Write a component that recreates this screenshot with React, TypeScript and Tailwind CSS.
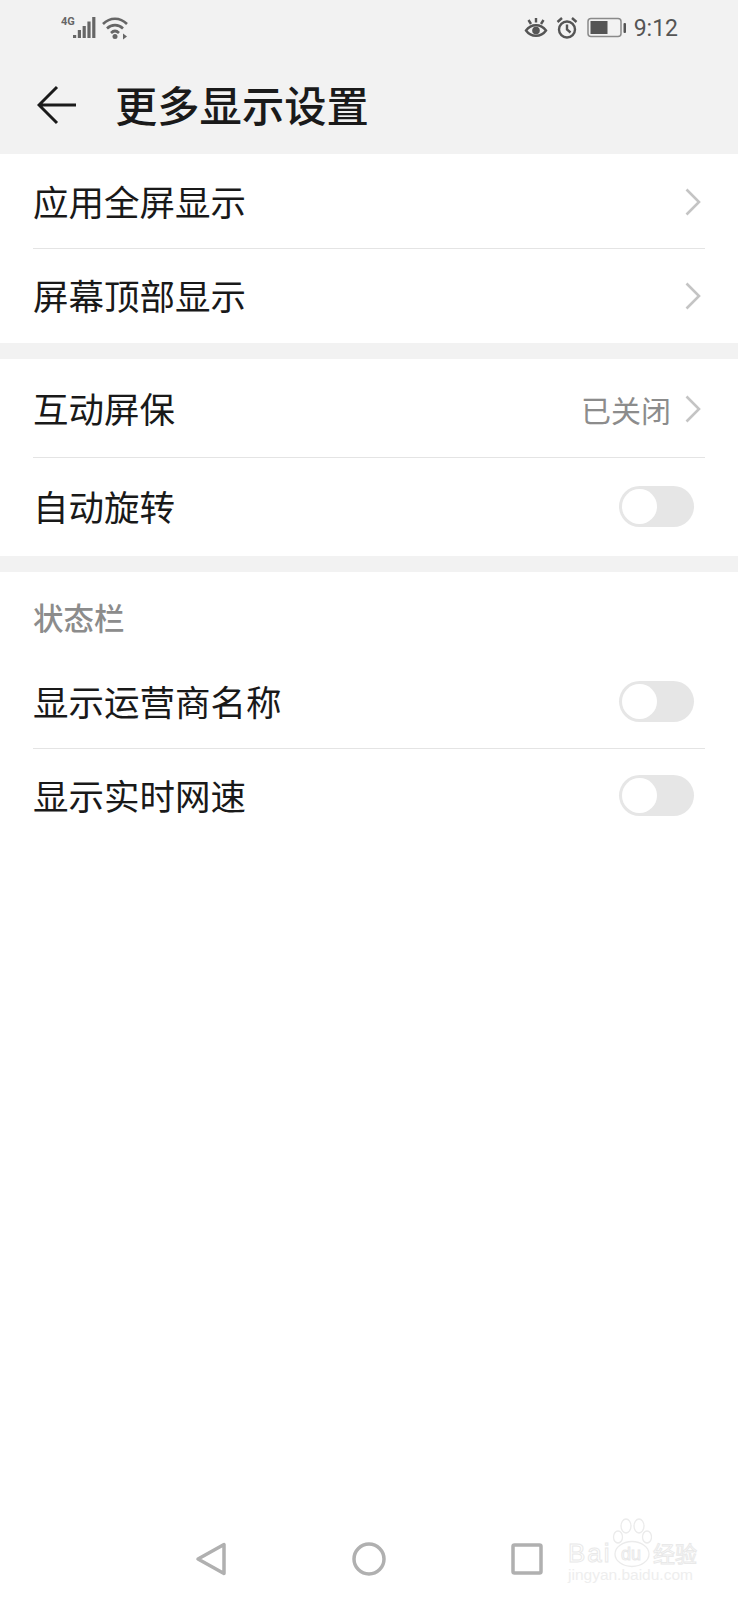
const cjk = "font-['Noto_Sans_CJK_SC','Noto_Sans',sans-serif]";

function Chevron() {
  return (
    <svg className="mr-[4px]" width="18" height="30" viewBox="0 0 18 30" fill="none" stroke="#c4c4c4" strokeWidth="2.6">
      <path d="M2.5 2.5 L15 15 L2.5 27.5" />
    </svg>
  );
}

function Toggle() {
  return (
    <div className="flex h-[41px] w-[75px] -translate-y-px items-center rounded-full bg-[#e6e6e6] pl-[3px]">
      <div className="h-[35px] w-[35px] rounded-full bg-white" />
    </div>
  );
}

function Row({ label, right, h, divider }: { label: string; right: React.ReactNode; h: string; divider?: boolean }) {
  return (
    <div className={`relative flex items-center justify-between pl-[33px] pr-[32px] ${h}`}>
      <span className="-translate-y-px text-[35.5px] leading-none text-[#191919]">{label}</span>
      <div className="flex items-center">{right}</div>
      {divider && <div className="absolute bottom-0 left-[33px] right-[33px] h-px bg-[#e4e4e4]" />}
    </div>
  );
}

function Signal() {
  return (
    <svg width="68" height="26" viewBox="0 0 68 26" fill="#666">
      <text x="0" y="10" fontSize="11" fontWeight="700" fontFamily="Roboto, sans-serif">4G</text>
      <rect x="12" y="20" width="3.2" height="3" />
      <rect x="16.8" y="15" width="3.2" height="8" />
      <rect x="21.6" y="11" width="3.2" height="12" />
      <rect x="26.4" y="6.5" width="3.2" height="16.5" />
      <rect x="31.2" y="2" width="3.2" height="21" />
      <g fill="none" stroke="#666" strokeWidth="2.6">
        <path d="M42 9 C49 2 59 2 66 9" />
        <path d="M46 13.5 C50.5 9 57.5 9 62 13.5" />
        <path d="M50 18 C52.5 15.5 55.5 15.5 58 18" />
      </g>
      <circle cx="54" cy="21.5" r="2.5" />
      <path d="M62 18.5 L66 21.5 L62 24.5 Z" />
    </svg>
  );
}

function StatusRight() {
  return (
    <div className="flex items-center">
      <svg width="24" height="24" viewBox="0 0 24 24" fill="none" stroke="#555" strokeWidth="2.4">
        <path d="M2 14.5 C7 7.5 17 7.5 22 14.5 C17 21.5 7 21.5 2 14.5 Z" />
        <circle cx="12" cy="14.5" r="3.8" fill="#555" stroke="none" />
        <path d="M4.5 4 L7 8 M12 2 V6.5 M19.5 4 L17 8" />
      </svg>
      <svg className="ml-[8px]" width="22" height="24" viewBox="0 0 22 24" fill="none" stroke="#555" strokeWidth="2.4">
        <circle cx="11" cy="13.5" r="8" />
        <path d="M11 8.5 V13.5 L14.5 16.5" />
        <path d="M1.5 6 L6 2 M20.5 6 L16 2" />
      </svg>
      <svg className="ml-[9px]" width="40" height="22" viewBox="0 0 40 22">
        <rect x="1" y="1.5" width="33" height="18" rx="3" fill="none" stroke="#8a8a8a" strokeWidth="1.5" />
        <rect x="3.5" y="4" width="17" height="13" fill="#555" />
        <rect x="36.5" y="6" width="2.5" height="10" rx="1" fill="#555" />
      </svg>
      <span className="ml-[7px] font-['Roboto',sans-serif] text-[23px] leading-none text-[#555]">9:12</span>
    </div>
  );
}

function Watermark() {
  const outline = "leading-none text-white [-webkit-text-stroke:1px_#e9e9e9]";
  return (
    <div className="absolute left-[568px] top-[1518px] h-[62px] w-[132px]">
      <svg className="absolute left-[44px] top-0" width="40" height="50" viewBox="0 0 40 50" fill="white" stroke="#ebebeb" strokeWidth="1.3">
        <ellipse cx="6" cy="19" rx="4.5" ry="6" />
        <ellipse cx="14" cy="8" rx="5" ry="7" />
        <ellipse cx="27" cy="8" rx="5" ry="7" />
        <ellipse cx="35" cy="19" rx="4.5" ry="6" />
        <ellipse cx="20" cy="36" rx="17" ry="12.5" />
      </svg>
      <span className={`absolute left-0 top-[22px] font-['Liberation_Sans',sans-serif] text-[26px] tracking-[2px] ${outline}`}>Bai</span>
      <span className={`absolute left-[53px] top-[27px] font-['Liberation_Sans',sans-serif] text-[18px] ${outline}`}>du</span>
      <span className={`absolute left-[85px] top-[23px] text-[22px] ${outline}`}>经验</span>
      <span className="absolute left-0 top-[49px] font-['Liberation_Sans',sans-serif] text-[15.5px] leading-none text-[#eeeeee]">jingyan.baidu.com</span>
    </div>
  );
}

export default function App() {
  return (
    <div className={`relative h-[1600px] w-[738px] overflow-hidden bg-white ${cjk}`}>
      <div className="h-[154px] bg-[#f2f2f2]">
        <div className="flex h-[56px] items-center justify-between pl-[61px] pr-[60px]">
          <Signal />
          <StatusRight />
        </div>
        <div className="flex h-[98px] items-center pl-[37px]">
          <svg width="40" height="40" viewBox="0 0 40 40" fill="none" stroke="#1a1a1a" strokeWidth="3">
            <path d="M20 2 L2 20 L20 38 M2 20 H39" />
          </svg>
          <span className="ml-[38px] -translate-y-px text-[42.3px] font-medium leading-none text-[#1a1a1a]">更多显示设置</span>
        </div>
      </div>

      <Row label="应用全屏显示" h="h-[95px]" divider right={<Chevron />} />
      <Row label="屏幕顶部显示" h="h-[94px]" right={<Chevron />} />
      <div className="h-[16px] bg-[#f2f2f2]" />
      <Row
        label="互动屏保"
        h="h-[99px]"
        divider
        right={
          <>
            <span className="mr-[13px] text-[30px] leading-none text-[#8c8c8c]">已关闭</span>
            <Chevron />
          </>
        }
      />
      <Row label="自动旋转" h="h-[98px]" right={<div className="mr-[12px]"><Toggle /></div>} />
      <div className="h-[16px] bg-[#f2f2f2]" />
      <div className="flex h-[83px] items-start pl-[33px] pt-[30px]">
        <span className="text-[30.5px] font-medium leading-none text-[#8c8c8c]">状态栏</span>
      </div>
      <Row label="显示运营商名称" h="h-[94px]" divider right={<div className="mr-[12px]"><Toggle /></div>} />
      <Row label="显示实时网速" h="h-[94px]" right={<div className="mr-[12px]"><Toggle /></div>} />

      <div className="absolute bottom-[24px] left-0 right-0 flex items-center justify-center gap-[125px]">
        <svg width="32" height="34" viewBox="0 0 32 34" fill="none" stroke="#b0b0b0" strokeWidth="3.5" strokeLinejoin="round">
          <path d="M29 2.5 V31.5 L3 17 Z" />
        </svg>
        <svg width="34" height="34" viewBox="0 0 34 34" fill="none" stroke="#b0b0b0" strokeWidth="3.5">
          <circle cx="17" cy="17" r="15" />
        </svg>
        <svg width="32" height="32" viewBox="0 0 32 32" fill="none" stroke="#b0b0b0" strokeWidth="3.5" strokeLinejoin="round">
          <rect x="2" y="2" width="28" height="28" rx="1.5" />
        </svg>
      </div>
      <Watermark />
    </div>
  );
}
